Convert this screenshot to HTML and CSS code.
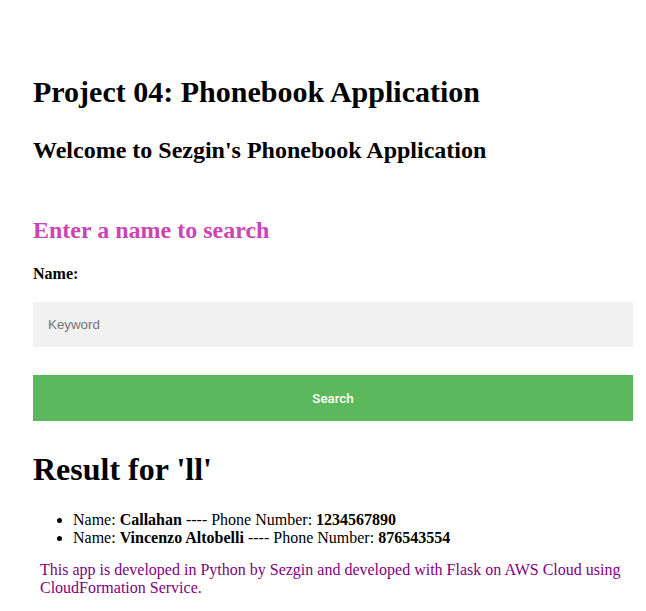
FILE: index.html
```html
<!DOCTYPE html>
<html>
<head>
<meta charset="utf-8">
<link rel="stylesheet" href="styles.css">
</head>
<body>
<div class="page">
  <h1 class="title">Project 04: Phonebook Application</h1>
  <h2 class="welcome">Welcome to Sezgin's Phonebook Application</h2>
  <form class="search-form">
    <h2 class="prompt">Enter a name to search</h2>
    <label class="label">Name:</label>
    <input class="keyword" type="text" placeholder="Keyword">
    <button class="btn" type="button">Search</button>
  </form>
  <h1 class="result-title">Result for 'll'</h1>
  <ul class="results">
    <li>Name: <b>Callahan</b> ---- Phone Number: <b>1234567890</b></li>
    <li>Name: <b>Vincenzo Altobelli</b> ---- Phone Number: <b>876543554</b></li>
  </ul>
  <p class="footer">This app is developed in Python by Sezgin and developed with Flask on AWS Cloud using CloudFormation Service.</p>
</div>
</body>
</html>
```
FILE: styles.css
```css
body {
  margin: 0;
  font-family: "Liberation Serif", "Times New Roman", serif;
  color: #000;
  background: #fff;
}
.page {
  padding: 50px 13px 0 33px;
}
.title {
  font-size: 30px;
  margin: 25px 0 0;
}
.welcome {
  font-size: 24px;
  margin: 28px 0 0;
}
.search-form {
  display: flex;
  flex-direction: column;
  align-items: stretch;
  margin-top: 53px;
}
.prompt {
  color: #cc44b4;
  font-size: 24px;
  margin: 0;
}
.label {
  font-weight: bold;
  font-size: 16px;
  margin-top: 21px;
}
.keyword {
  margin-top: 19px;
  height: 45px;
  box-sizing: border-box;
  border: none;
  background: #f1f1f1;
  padding: 0 15px;
  font-family: "Liberation Sans", Arial, sans-serif;
  font-size: 13.33px;
  outline: none;
}
.keyword::placeholder {
  color: #757575;
}
.btn {
  margin-top: 28px;
  height: 46px;
  border: none;
  background: #5cb85c;
  color: #fff;
  font-family: Roboto, "Liberation Sans", sans-serif;
  font-size: 13.33px;
  font-weight: 500;
}
.result-title {
  font-size: 32px;
  margin: 30px 0 0;
}
.results {
  list-style: disc;
  margin: 23px 0 0 -14px;
  padding-left: 54px;
  font-size: 16px;
}
.footer {
  color: #800080;
  font-size: 16px;
  margin: 14px 0 0 7px;
  line-height: 1.15;
}
```
